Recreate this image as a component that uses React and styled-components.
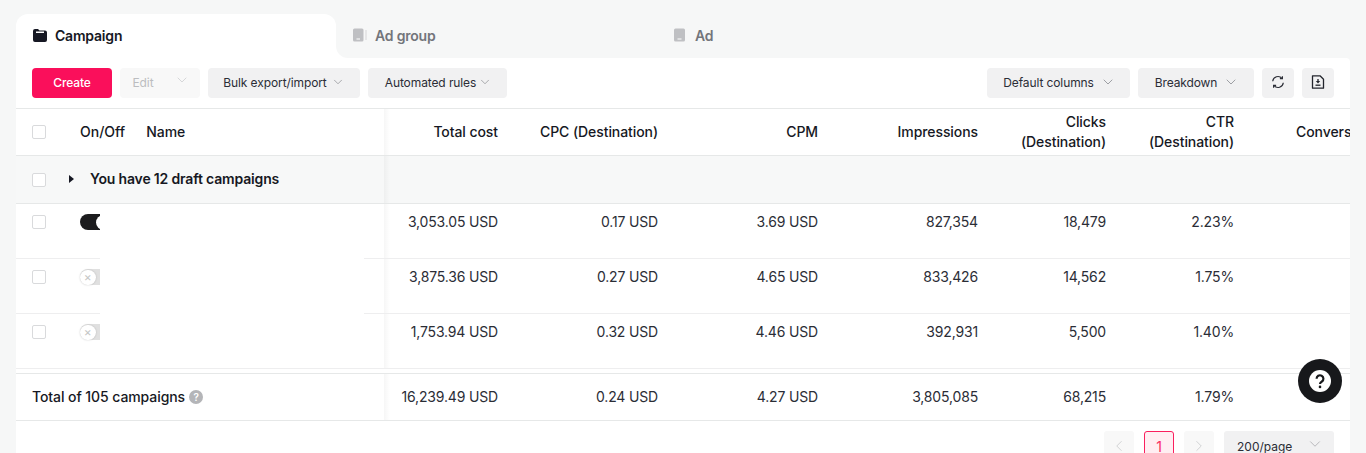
import React from "react";
import styled, { createGlobalStyle } from "styled-components";
import { ChevronDown, ChevronLeft, ChevronRight } from "lucide-react";

const GlobalStyle = createGlobalStyle`
  html, body {
    margin: 0;
    height: 453px;
    overflow: hidden;
    background: #f6f7f7;
    font-family: Inter, "Liberation Sans", sans-serif;
    color: #161823;
  }
  * { box-sizing: border-box; }
`;

const Page = styled.div`
  position: relative;
  height: 453px;
  padding: 14px 16px 0;
  overflow: hidden;
`;

const Tabs = styled.div`
  display: flex;
  height: 44px;
`;

const Tab = styled.div`
  position: relative;
  width: 320px;
  display: flex;
  align-items: center;
  gap: 8px;
  padding: 0 0 2px 17px;
  font-size: 14px;
  font-weight: 600;
  letter-spacing: -0.2px;
  color: ${(p) => (p.$active ? "#161823" : "#73757b")};
  background: ${(p) => (p.$active ? "#fff" : "transparent")};
  border-radius: 12px 12px 0 0;
`;

const Corner = styled.div`
  position: absolute;
  left: 0;
  bottom: 0;
  width: 12px;
  height: 12px;
  background: #fff;

  &::after {
    content: "";
    position: absolute;
    inset: 0;
    background: #f6f7f7;
    border-bottom-left-radius: 12px;
  }
`;

const Panel = styled.div`
  background: #fff;
  border-top-right-radius: 4px;
  height: 395px;
`;

const Toolbar = styled.div`
  height: 51px;
  padding: 10px 16px 0;
  display: flex;
  gap: 8px;
  border-bottom: 1px solid #e6e8e8;
`;

const Spacer = styled.div`
  flex: 1;
`;

const Button = styled.button`
  width: ${(p) => p.$w}px;
  height: 30px;
  padding: 0 0 2px ${(p) => p.$pl ?? 0}px;
  border: 0;
  border-radius: 4px;
  display: flex;
  align-items: center;
  justify-content: center;
  gap: ${(p) => p.$gap ?? 6}px;
  font: 400 12px Inter, "Liberation Sans", sans-serif;
  letter-spacing: -0.1px;
  color: ${(p) => (p.$primary ? "#fff" : p.$disabled ? "#bcbdc0" : "#2b2d36")};
  background: ${(p) => (p.$primary ? "#fa0f5b" : p.$disabled ? "#f8f8f8" : "#f1f1f2")};
  font-weight: ${(p) => (p.$primary ? 500 : 400)};
`;

const Row = styled.div`
  position: relative;
  display: grid;
  grid-template-columns: 368px 114px 160px 160px 160px 128px 128px 145px;
  height: ${(p) => p.$h}px;
  background: ${(p) => p.$bg || "#fff"};
  border-bottom: 1px solid ${(p) => p.$line || "#e6e8e8"};
  border-top: ${(p) => (p.$lineTop ? "1px solid #e6e8e8" : "0")};
  overflow: hidden;
  font-size: 14px;
  line-height: 20px;
  letter-spacing: -0.17px;
`;

const Frozen = styled.div`
  position: relative;
  z-index: 1;
  display: flex;
  align-items: ${(p) => (p.$top ? "flex-start" : "center")};
  padding: ${(p) => (p.$top ? "11px" : "0")} 0 0 16px;
  background: ${(p) => p.$bg || "#fff"};

  &::after {
    content: "";
    position: absolute;
    top: 0;
    bottom: 0;
    left: 100%;
    width: 6px;
    background: linear-gradient(to right, rgba(0, 0, 0, 0.035), rgba(0, 0, 0, 0));
  }
`;

const HeadCell = styled.div`
  display: flex;
  align-items: center;
  justify-content: flex-end;
  text-align: right;
  font-weight: 500;
  letter-spacing: -0.08px;
  white-space: nowrap;
`;

const Cell = styled.div`
  text-align: right;
  padding-top: ${(p) => p.$pad ?? 8}px;
  color: #2b2d36;
  white-space: nowrap;
`;

const Check = styled.span`
  flex: none;
  width: 14px;
  height: 14px;
  background: #fff;
  border: 1px solid #d9dadc;
  border-radius: 2px;
`;

const HeadLabel = styled.span`
  font-weight: 500;
  letter-spacing: 0;
  margin-left: ${(p) => p.$ml}px;
`;

const Arrow = styled.span`
  width: 0;
  height: 0;
  margin: -2px 0 0 23px;
  border-left: 5px solid #161823;
  border-top: 4px solid transparent;
  border-bottom: 4px solid transparent;
`;

const DraftLabel = styled.span`
  margin-left: 16px;
  padding-bottom: 2px;
  font-weight: 600;
`;

const Toggle = styled.span`
  position: relative;
  flex: none;
  margin: -1px 0 0 34px;
  width: 40px;
  height: 16px;
  border-radius: 8px;
  background: ${(p) => (p.$on ? "#1c1c1e" : "#e0e0e0")};
`;

const Knob = styled.span`
  position: absolute;
  top: 0.5px;
  left: ${(p) => (p.$on ? "16px" : "0")};
  width: 15.5px;
  height: 15.5px;
  border-radius: 50%;
  background: #fff;
  box-shadow: 0 0 2px rgba(0, 0, 0, 0.2);
  display: flex;
  align-items: center;
  justify-content: center;
  font-size: 12px;
  line-height: 1;
  color: #c6c6c6;
`;

const KnobDot = styled.span`
  width: 6px;
  height: 6px;
  border-radius: 50%;
  border: 1.5px solid #1c1c1e;
`;

const Body = styled.div`
  position: relative;
`;

/* blanked out campaign names */
const NameMask = styled.div`
  position: absolute;
  z-index: 2;
  left: 84px;
  top: 0;
  width: 264px;
  height: 164px;
  background: #fff;
`;

const Gap = styled.div`
  height: 4px;
`;

const TotalLabel = styled.span`
  font-weight: 500;
  letter-spacing: -0.08px;
`;

const Hint = styled.span`
  margin: -1px 0 0 4px;
  width: 14px;
  height: 14px;
  border-radius: 50%;
  background: #b4b5b8;
  color: #fff;
  font-size: 10px;
  font-weight: 600;
  line-height: 14px;
  text-align: center;
`;

const Pager = styled.div`
  display: flex;
  justify-content: flex-end;
  gap: 10px;
  padding: 10px 16px 0 0;
`;

const PageButton = styled.div`
  width: 30px;
  height: 30px;
  border-radius: 3px;
  display: flex;
  align-items: center;
  justify-content: center;
  font-size: 14px;
  color: ${(p) => (p.$active ? "#fa2c5f" : "#c4c5c8")};
  background: ${(p) => (p.$active ? "#ffeef2" : "#f8f8f8")};
  border: ${(p) => (p.$active ? "1px solid #fa1f5e" : "0")};
`;

const PageSize = styled.div`
  width: 110px;
  height: 30px;
  border-radius: 3px;
  background: #f1f1f2;
  display: flex;
  align-items: center;
  justify-content: space-between;
  padding: 0 10px 0 13px;
  font-size: 12px;
  color: #2b2d36;
`;

const RaisedCaret = styled.span`
  display: flex;
  margin-top: -5px;
`;

const HelpButton = styled.div`
  position: absolute;
  right: 24px;
  top: 359px;
  z-index: 5;
  width: 44px;
  height: 44px;
  border-radius: 50%;
  background: #17181b;
  display: flex;
  align-items: center;
  justify-content: center;
`;

const FolderIcon = () => (
  <svg width="14" height="14" viewBox="0 0 14 14">
    <path d="M0 3a2 2 0 0 1 2-2h3l1.500 1.500H12a2 2 0 0 1 2 2V12a2 2 0 0 1-2 2H2a2 2 0 0 1-2-2z" fill="#161823" />
    <rect x="3" y="3.500" width="8" height="1.500" fill="#fff" />
  </svg>
);

const GroupIcon = () => (
  <svg width="14" height="14" viewBox="0 0 14 14">
    <rect x="0" y="0.500" width="10.500" height="13" rx="1.500" fill="#bfc0c3" />
    <rect x="3.500" y="10.500" width="3.500" height="1" fill="#fff" />
    <rect x="12.500" y="2" width="1" height="10" fill="#d5d6d8" />
  </svg>
);

const AdIcon = () => (
  <svg width="14" height="14" viewBox="0 0 14 14">
    <rect x="1" y="0.500" width="11" height="13" rx="1.500" fill="#bfc0c3" />
    <rect x="4.500" y="10.500" width="4" height="1" fill="#fff" />
  </svg>
);

const RefreshIcon = () => (
  <svg width="14" height="14" viewBox="0 0 14 14" fill="none" stroke="#2b2d36" strokeWidth="1.200">
    <path d="M1.700 6.200A5.300 5.300 0 0 1 11 3.400" />
    <path d="M12.300 7.800A5.300 5.300 0 0 1 3 10.600" />
    <path d="M11.400 1.200v2.500H8.900" />
    <path d="M2.600 12.800v-2.500h2.500" />
  </svg>
);

const ExportIcon = () => (
  <svg width="14" height="14" viewBox="0 0 14 14" fill="none" stroke="#22242c" strokeWidth="1.300">
    <path d="M1.500 0.800h7.500l3.500 3.500v8.900H1.500z" strokeLinejoin="round" />
    <path d="M7 4v2" />
    <path d="M4.800 6h4.400L7 8.400z" fill="#22242c" stroke="none" />
    <path d="M4.500 10.200h5" />
  </svg>
);

const HelpIcon = () => (
  <svg width="22" height="22" viewBox="0 0 22 22">
    <circle cx="11" cy="11" r="11" fill="#fff" />
    <path
      d="M7.600 8.700a3.400 3.400 0 1 1 5.300 2.800c-1.200.8-1.900 1.300-1.900 2.500"
      fill="none"
      stroke="#17181b"
      strokeWidth="2.200"
    />
    <circle cx="11" cy="16.900" r="1.300" fill="#17181b" />
  </svg>
);

const Caret = ({ color = "#73757b", size = 16 }) => (
  <ChevronDown size={size} strokeWidth={1} color={color} />
);

const columns = [
  ["Total cost"],
  ["CPC (Destination)"],
  ["CPM"],
  ["Impressions"],
  ["Clicks", "(Destination)"],
  ["CTR", "(Destination)"],
];

const rows = [
  { on: true, values: ["3,053.05 USD", "0.17 USD", "3.69 USD", "827,354", "18,479", "2.23%"] },
  { on: false, values: ["3,875.36 USD", "0.27 USD", "4.65 USD", "833,426", "14,562", "1.75%"] },
  { on: false, values: ["1,753.94 USD", "0.32 USD", "4.46 USD", "392,931", "5,500", "1.40%"] },
];

const totals = ["16,239.49 USD", "0.24 USD", "4.27 USD", "3,805,085", "68,215", "1.79%"];

const App = () => (
  <Page>
    <GlobalStyle />
    <Tabs>
      <Tab $active>
        <FolderIcon />
        Campaign
      </Tab>
      <Tab>
        <Corner />
        <GroupIcon />
        Ad group
      </Tab>
      <Tab>
        <AdIcon />
        Ad
      </Tab>
    </Tabs>
    <Panel>
      <Toolbar>
        <Button $primary $w={80}>Create</Button>
        <Button $disabled $w={80} $gap={20} $pl={2}>
          Edit
          <RaisedCaret>
            <Caret color="#c4c5c8" />
          </RaisedCaret>
        </Button>
        <Button $w={152} $gap={4}>
          Bulk export/import
          <Caret size={14} />
        </Button>
        <Button $w={139} $gap={2} $pl={2}>
          Automated rules
          <Caret size={14} />
        </Button>
        <Spacer />
        <Button $w={143} $gap={6} $pl={2}>
          Default columns
          <Caret />
        </Button>
        <Button $w={116} $gap={6} $pl={2}>
          Breakdown
          <Caret />
        </Button>
        <Button $w={32}>
          <RefreshIcon />
        </Button>
        <Button $w={32}>
          <ExportIcon />
        </Button>
      </Toolbar>

      <Row $h={47}>
        <Frozen>
          <Check />
          <HeadLabel $ml={34}>On/Off</HeadLabel>
          <HeadLabel $ml={21}>Name</HeadLabel>
        </Frozen>
        {columns.map((c) => (
          <HeadCell key={c[0]}>
            <span>
              {c[0]}
              {c[1] && <br />}
              {c[1]}
            </span>
          </HeadCell>
        ))}
        <HeadCell>Conversions</HeadCell>
      </Row>

      <Row $h={48} $bg="#f7f8f8">
        <Frozen $bg="#f7f8f8">
          <Check />
          <Arrow />
          <DraftLabel>You have 12 draft campaigns</DraftLabel>
        </Frozen>
      </Row>

      <Body>
        {rows.map((r) => (
          <Row $h={55} $line="#eeeeef" key={r.values[0]}>
            <Frozen $top>
              <Check />
              <Toggle $on={r.on}>
                <Knob $on={r.on}>{r.on ? <KnobDot /> : "×"}</Knob>
              </Toggle>
            </Frozen>
            {r.values.map((v) => (
              <Cell key={v}>{v}</Cell>
            ))}
          </Row>
        ))}
        <NameMask />
      </Body>

      <Gap />

      <Row $h={48} $lineTop>
        <Frozen>
          <TotalLabel>Total of 105 campaigns</TotalLabel>
          <Hint>?</Hint>
        </Frozen>
        {totals.map((v) => (
          <Cell $pad={13} key={v}>{v}</Cell>
        ))}
      </Row>

      <Pager>
        <PageButton>
          <ChevronLeft size={18} strokeWidth={1} />
        </PageButton>
        <PageButton $active>1</PageButton>
        <PageButton>
          <ChevronRight size={18} strokeWidth={1} />
        </PageButton>
        <PageSize>
          200/page
          <RaisedCaret>
            <Caret color="#a5a6aa" size={18} />
          </RaisedCaret>
        </PageSize>
      </Pager>
    </Panel>
    <HelpButton>
      <HelpIcon />
    </HelpButton>
  </Page>
);

export default App;
